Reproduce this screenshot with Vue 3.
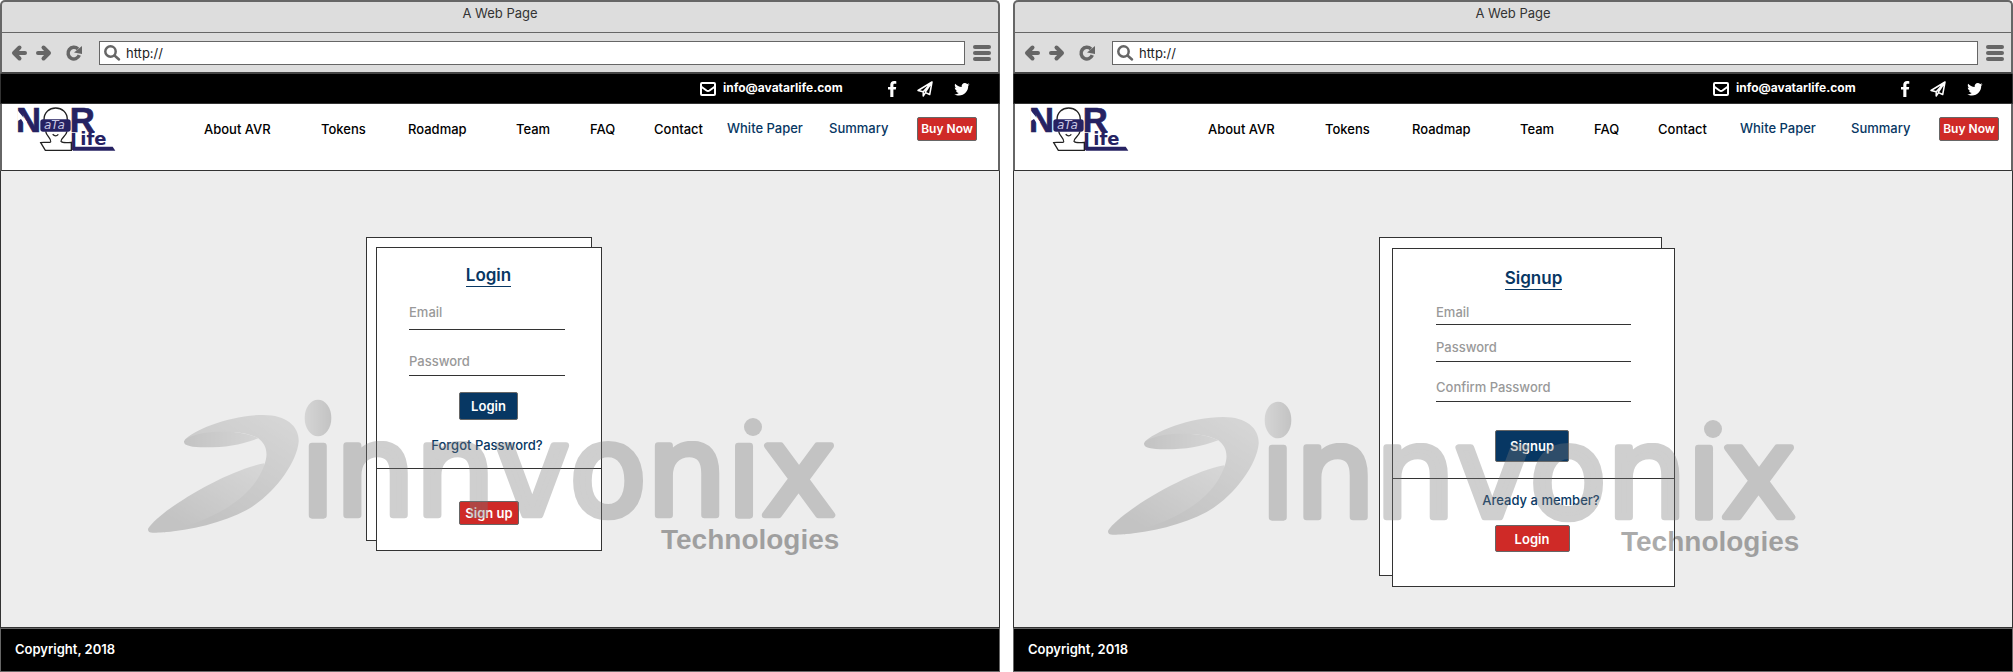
<script setup>
const navLinks = ['About AVR', 'Tokens', 'Roadmap', 'Team', 'FAQ', 'Contact']

const pages = [
  {
    id: 'login',
    title: 'Login',
    fields: [
      { label: 'Email', type: 'email' },
      { label: 'Password', type: 'password' }
    ],
    submit: 'Login',
    prompt: 'Forgot Password?',
    alternate: 'Sign up'
  },
  {
    id: 'signup',
    title: 'Signup',
    fields: [
      { label: 'Email', type: 'email' },
      { label: 'Password', type: 'password' },
      { label: 'Confirm Password', type: 'password' }
    ],
    submit: 'Signup',
    prompt: 'Aready a member?',
    alternate: 'Login'
  }
]
</script>

<template>
  <main class="screens">
    <article v-for="page in pages" :key="page.id" class="screen" :class="page.id">
      <div class="chrome">
        <div class="titlebar">A Web Page</div>
        <div class="toolbar">
          <button class="tool back" type="button" aria-label="Back">
            <svg width="16" height="16" viewBox="0 0 16 16"><path d="M8.500 2.500L3 8l5.500 5.500M3.500 8H14" /></svg>
          </button>
          <button class="tool forward" type="button" aria-label="Forward">
            <svg width="16" height="16" viewBox="0 0 16 16"><path d="M7.500 2.500L13 8l-5.500 5.500M12.500 8H2" /></svg>
          </button>
          <button class="tool reload" type="button" aria-label="Reload">
            <svg width="16" height="16" viewBox="0 0 16 16">
              <path class="arc" d="M13.300 10.200A5.800 5.800 0 1 1 12 4" />
              <path class="head" d="M16 1v8L8 7.500z" />
            </svg>
          </button>
          <div class="address">
            <svg width="17" height="16" viewBox="0 0 17 16" aria-hidden="true">
              <circle cx="6.500" cy="6.500" r="5.200" /><path d="M10.500 10.500L15 14.500" />
            </svg>
            <input :id="page.id + '-url'" type="text" value="http://" aria-label="Address" />
          </div>
          <button class="menu" type="button" aria-label="Menu"><i></i><i></i><i></i></button>
        </div>
      </div>

      <div class="topbar">
        <a class="mail" href="#">
          <svg width="16" height="14" viewBox="0 0 16 14" aria-hidden="true">
            <rect x="1" y="1" width="14" height="12" rx="1" /><path d="M1 4.500L6.500 8.500Q8 9.500 9.500 8.500L15 4.500" />
          </svg>
          <span>info@avatarlife.com</span>
        </a>
        <a class="social" href="#" aria-label="Facebook">
          <svg width="16" height="16" viewBox="0 0 16 16"><path d="M12.300.2v2.600h-1.600c-1 0-1.300.5-1.300 1.300v1.800h2.800l-.4 2.700H9.400V16H6.300V8.600H4V5.900h2.300V3.800C6.300 1.500 7.800 0 10.100 0c1 0 1.900.1 2.200.2z" /></svg>
        </a>
        <a class="social" href="#" aria-label="Telegram">
          <svg class="plane" width="16" height="16" viewBox="0 0 16 16"><path d="M1 9.500L15 1l-2.300 12.500-4.200-1.900L6.200 15v-4.300zM6.200 10.700L15 1 8 11.500" /></svg>
        </a>
        <a class="social last" href="#" aria-label="Twitter">
          <svg width="16" height="16" viewBox="0 0 16 16"><path d="M15.700 3.200c-.4.600-.9 1.200-1.500 1.600C14.400 10 10.500 14.500 5 14.500c-1.700 0-3.300-.5-4.700-1.300 1.700.2 3.300-.3 4.500-1.300-1.400 0-2.500-.9-2.900-2.100.5.100 1 .1 1.400-.1C1.800 9.400.7 8 .8 6.500c.4.200.9.400 1.400.4C.8 5.900.4 4.100 1.200 2.700c1.600 1.900 3.900 3.100 6.500 3.200C7.200 3.800 8.800 2 10.800 2c.9 0 1.700.4 2.300 1 .7-.1 1.400-.4 2-.8-.2.700-.7 1.300-1.400 1.700.7 0 1.400-.3 2-.7z" /></svg>
        </a>
      </div>

      <nav class="nav" aria-label="Main">
        <a class="logo" href="#" aria-label="Avatar Life">
          <svg width="100" height="46" viewBox="50 18 300 138">
            <g class="brand">
              <text class="cap" x="47" y="95">N</text>
              <text class="cap" x="208" y="95">R</text>
              <text class="ell" x="210" y="150">L</text>
              <text class="ife" x="240" y="136">ife</text>
              <path d="M217 140H337L345 152H217z" />
            </g>
            <path class="cut" d="M51 30L80 66 72 72 62 57 51 64z" />
            <path class="face" d="M131 60C130 12 202 12 201 60M136 94C138 108 153 115 151 125 149 130 130 125 121 128L135 151H213V127C203 128 186 129 182 124 181 114 198 108 200 94" />
            <path class="mouth" d="M157 103Q166 112 174 103" />
            <rect class="goggles" x="120" y="58" width="91" height="37" rx="8" />
            <text class="ata" x="131" y="87">aTa</text>
          </svg>
        </a>
        <a v-for="link in navLinks" :key="link" href="#">{{ link }}</a>
        <a class="doc" href="#">White Paper</a>
        <a class="doc" href="#">Summary</a>
        <button class="buy" type="button">Buy Now</button>
      </nav>

      <section class="body">
        <form class="card" @submit.prevent>
          <div class="upper">
            <h2>{{ page.title }}</h2>
            <div v-for="(field, i) in page.fields" :key="field.label" class="field">
              <label :for="page.id + '-field-' + i">{{ field.label }}</label>
              <input :id="page.id + '-field-' + i" :type="field.type" :placeholder="field.label" />
            </div>
            <button class="submit" type="submit">{{ page.submit }}</button>
            <a v-if="page.id === 'login'" class="prompt" href="#">{{ page.prompt }}</a>
          </div>
          <div class="lower">
            <a v-if="page.id === 'signup'" class="prompt" href="#">{{ page.prompt }}</a>
            <button class="alternate" type="button">{{ page.alternate }}</button>
          </div>
        </form>

        <svg class="watermark" width="700" height="165" viewBox="54 45 2100 495">
          <defs>
            <linearGradient :id="page.id + '-band'" x1="1" y1="0" x2="0.300" y2="1">
              <stop offset="0.100" stop-color="#aaa" /><stop offset="0.900" stop-color="#777" />
            </linearGradient>
            <linearGradient :id="page.id + '-leaf'" x1="0" y1="0" x2="1" y2="0">
              <stop offset="0" stop-color="#777" /><stop offset="1" stop-color="#aaa" />
            </linearGradient>
            <linearGradient :id="page.id + '-tail'" x1="0" y1="1" x2="1" y2="0">
              <stop offset="0.200" stop-color="#777" /><stop offset="1" stop-color="#b0b0b0" />
            </linearGradient>
            <linearGradient :id="page.id + '-dot'" x1="0" y1="0" x2="1" y2="0">
              <stop offset="0" stop-color="#aaa" /><stop offset="1" stop-color="#777" />
            </linearGradient>
            <clipPath :id="page.id + '-letters'"><rect x="500" y="183" width="1700" height="260" /></clipPath>
          </defs>
          <path :fill="`url(#${page.id}-tail)`" d="M55 445C90 390 290 270 403 250 420 330 260 425 130 453 100 458 80 458 68 458 57 458 52 452 55 445z" />
          <path :fill="`url(#${page.id}-band)`" d="M162 182C190 150 300 105 400 105 470 105 508 140 506 185 500 250 430 345 350 390 280 428 180 451 100 457 260 420 370 350 403 255 418 215 405 190 385 175 350 155 290 150 220 163z" />
          <path :fill="`url(#${page.id}-leaf)`" d="M162 184C170 170 210 158 250 156 310 152 360 160 385 175 330 195 290 202 225 202 185 202 160 198 162 184z" />
          <ellipse :fill="`url(#${page.id}-dot)`" cx="564" cy="114" rx="40" ry="55" />
          <circle class="dot" cx="1869" cy="141" r="27" />
          <g :clip-path="`url(#${page.id}-letters)`">
            <text class="wordmark" x="511" y="404">innvonix</text>
          </g>
          <text class="tagline" x="1593" y="508">Technologies</text>
        </svg>
      </section>

      <footer class="footer">Copyright, 2018</footer>
    </article>
  </main>
</template>

<style>
body {
  margin: 0;
  background: #fff;
}
</style>

<style scoped>
* {
  box-sizing: border-box;
}

.screens {
  display: grid;
  grid-template-columns: 1fr 1fr;
  gap: 13px;
  font: 13px/20px Inter, "Liberation Sans", sans-serif;
  color: #000;
}

.screen {
  display: flex;
  flex-direction: column;
  min-height: 100vh;
}

a {
  color: inherit;
  text-decoration: none;
}

button,
input {
  font: inherit;
  margin: 0;
  padding: 0;
}

button {
  cursor: pointer;
}

svg {
  display: block;
  overflow: visible;
}

.chrome {
  border: 2px solid #666;
  border-bottom-color: #444;
  border-radius: 5px 5px 0 0;
  background: #ddd;
}

.titlebar {
  height: 31px;
  padding-top: 1px;
  border-bottom: 1px solid #666;
  text-align: center;
  color: #333;
}

.toolbar {
  display: flex;
  align-items: center;
  height: 39px;
  padding: 0 7px 0 9px;
}

.tool,
.menu {
  border: 0;
  background: none;
}

.tool path {
  fill: none;
  stroke: #666;
  stroke-width: 4;
  stroke-linecap: round;
  stroke-linejoin: round;
}

.tool .arc {
  stroke-width: 3.500;
  stroke-linecap: butt;
}

.tool .head {
  fill: #666;
  stroke: none;
}

.forward {
  margin-left: 9px;
}

.reload {
  margin: 0 17px 0 14px;
}

.address {
  flex: 1;
  display: flex;
  align-items: center;
  gap: 5px;
  height: 24px;
  padding-left: 4px;
  border: 1px solid #666;
  background: #fff;
}

.address svg {
  fill: none;
  stroke: #666;
  stroke-width: 2.500;
  stroke-linecap: round;
}

.address input {
  flex: 1;
  min-width: 0;
  border: 0;
  background: none;
  color: #222;
}

.menu {
  display: grid;
  gap: 2px;
  width: 18px;
  margin-left: 8px;
}

.menu i {
  height: 4px;
  border-radius: 2px;
  background: #666;
}

.topbar {
  display: flex;
  align-items: center;
  height: 30px;
  padding-right: 29px;
  justify-content: flex-end;
  border: solid #333;
  border-width: 0 1px 1px;
  background: #000;
  color: #fff;
}

.mail {
  display: flex;
  align-items: center;
  gap: 7px;
  width: 167px;
  font-size: 12px;
  font-weight: 700;
}

.mail svg,
.plane {
  fill: none;
  stroke: #fff;
  stroke-width: 2;
  stroke-linejoin: round;
}

.mail span {
  padding-bottom: 2px;
}

.plane {
  stroke-width: 1.500;
}

.social {
  margin-left: 17px;
  fill: #fff;
}

.last {
  margin-left: 21px;
}

.nav {
  display: grid;
  grid-template-columns: 202fr 117fr 87fr 108fr 74fr 64fr 73fr 102fr 88fr 81fr;
  height: 67px;
  padding-top: 2px;
  border: solid #666;
  border-width: 0 2px 1px;
  border-bottom-color: #333;
  background: #fff;
  align-items: start;
  white-space: nowrap;
  font-weight: 500;
}

.signup .nav {
  grid-template-columns: 193fr 117fr 87fr 108fr 74fr 64fr 82fr 111fr 88fr 72fr;
}

.nav > a {
  padding-top: 13px;
}

.nav > .logo {
  padding: 0 0 0 15px;
}

.nav > .doc {
  padding-top: 12px;
  color: #073763;
}

.buy {
  width: 60px;
  height: 24px;
  margin-top: 11px;
  font-size: 12px;
}

.buy,
.submit,
.alternate {
  border: 1px solid #666;
  border-radius: 2px;
  background: #cf2a27;
  color: #fff;
  font-weight: 600;
}

.brand {
  fill: #262262;
}

.cap {
  font: bold 104px "Liberation Sans", sans-serif;
  stroke: #262262;
  stroke-width: 2;
}

.ell {
  font: bold 70px "Liberation Sans", sans-serif;
}

.ife {
  font: bold 54px "DejaVu Sans", sans-serif;
}

.ata {
  font: italic 36px "DejaVu Sans", sans-serif;
  fill: #c9c8e4;
}

.cut {
  fill: #fff;
}

.face,
.mouth {
  fill: none;
  stroke: #222;
  stroke-width: 4;
}

.goggles {
  fill: #262262;
}

.body {
  position: relative;
  flex: 1;
  padding: 76px 0 40px 37.500%;
  border: solid #333;
  border-width: 0 1px 1px;
  background: #ededed;
}

.signup .body {
  padding-top: 77px;
  padding-left: 37.800%;
}

.card {
  position: relative;
  z-index: 0;
  width: 226px;
  font-weight: 500;
}

.signup .card {
  width: 283px;
}

.card::before {
  content: "";
  position: absolute;
  z-index: -1;
  inset: -10px 10px 10px -10px;
  border: 1px solid #333;
  background: #fff;
}

.signup .card::before {
  inset: -11px 13px 11px -13px;
}

.upper,
.lower {
  display: flex;
  flex-direction: column;
  align-items: center;
  border: 1px solid #333;
  background: #fff;
}

.upper {
  height: 222px;
  padding: 17px 33px 0 32px;
}

.lower {
  height: 83px;
  margin-top: -1px;
  padding-top: 32px;
}

.signup .upper {
  height: 231px;
  padding: 19px 43px 0;
}

.signup .lower {
  height: 109px;
  padding-top: 11px;
}

h2 {
  margin: 0 0 15px;
  border-bottom: 1px solid #073763;
  font-size: 17px;
  line-height: 21px;
  font-weight: 600;
  color: #073763;
}

.signup h2 {
  margin-bottom: 12px;
}

.field {
  width: 100%;
}

.field label {
  position: absolute;
  width: 1px;
  height: 1px;
  overflow: hidden;
  clip-path: inset(50%);
}

.field input {
  display: block;
  width: 156px;
  height: 28px;
  padding-bottom: 7px;
  border: 0;
  border-bottom: 1px solid #333;
  border-radius: 0;
  background: none;
}

.field input::placeholder {
  color: #999;
  opacity: 1;
}

.field + .field {
  margin-top: 21px;
}

.field + .field input {
  height: 25px;
  padding-bottom: 4px;
}

.signup .field input {
  width: 100%;
  height: 23px;
  padding-bottom: 2px;
}

.signup .field + .field {
  margin-top: 12px;
}

.signup .field + .field + .field {
  margin-top: 15px;
}

.signup .field + .field input {
  height: 25px;
  padding-bottom: 4px;
}

.submit {
  width: 59px;
  height: 28px;
  margin-top: 16px;
  background: #073763;
}

.signup .submit {
  width: 74px;
  height: 32px;
  margin: 28px 3px 0 0;
}

.prompt {
  margin-top: 15px;
  color: #073763;
  white-space: nowrap;
}

.login .prompt {
  margin-right: 3px;
}

.signup .prompt {
  margin: 0 0 15px 15px;
}

.alternate {
  width: 60px;
  height: 24px;
}

.signup .alternate {
  width: 75px;
  height: 27px;
  margin-right: 3px;
}

.watermark {
  position: absolute;
  z-index: 1;
  top: 224px;
  left: 14.700%;
  opacity: 0.350;
  pointer-events: none;
}

.signup .watermark {
  top: 226px;
  left: 9.400%;
}

.wordmark {
  font: 378px "DejaVu Sans", sans-serif;
  fill: #777;
  stroke: #777;
  stroke-width: 20;
  stroke-linejoin: round;
}

.dot {
  fill: #777;
}

.tagline {
  font: bold 84px "Liberation Sans", sans-serif;
  fill: #111;
}

.footer {
  height: 44px;
  padding: 10px 14px;
  border: 1px solid #666;
  background: #000;
  color: #fff;
  font-weight: 600;
}
</style>
